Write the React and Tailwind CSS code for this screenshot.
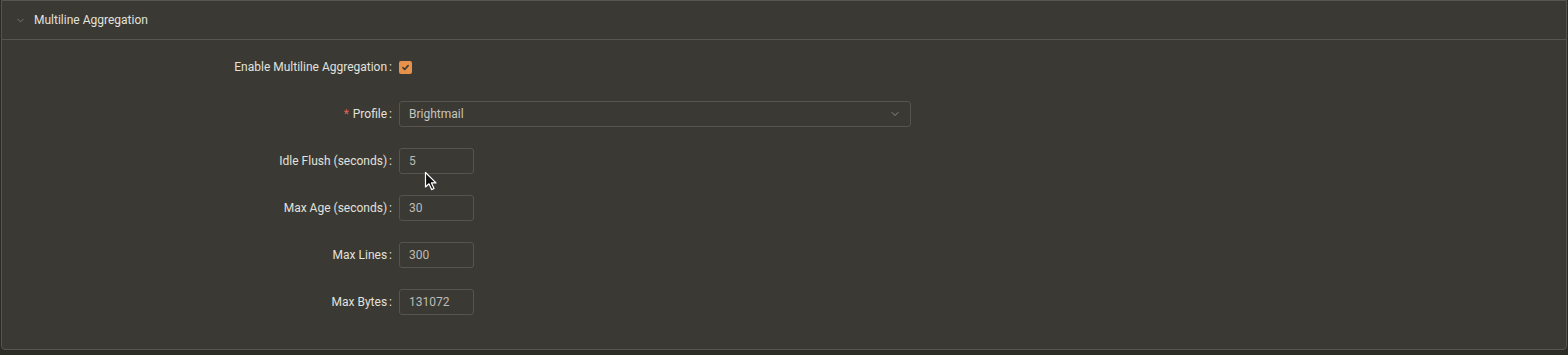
import { ChevronDown } from 'lucide-react';

const font = { fontFamily: 'Roboto, "Liberation Sans", sans-serif' };

function Row({ label, required, children }) {
  return (
    <div className="flex h-[32px] items-center mb-[15px]">
      <div className="w-[390px] shrink-0 flex justify-end items-center text-[12px] text-[#e2e1dc]">
        {required && <span className="text-[#e0645a] mr-[4px]">*</span>}
        <span>{label}</span>
        <span className="ml-[2px]">:</span>
      </div>
      <div className="pl-[7px] flex items-center">{children}</div>
    </div>
  );
}

function NumInput({ value }) {
  return (
    <div className="relative w-[75px] h-[26px] rounded-[3px] border border-[#55544e] bg-[#3a3934] flex items-center px-[9px] text-[12px] text-[#bdbcb6]">
      {value}
    </div>
  );
}

export default function App() {
  return (
    <div className="w-[1568px] h-[355px] bg-[#2c2c27] pr-[1px] pl-[1px]" style={font}>
      <div className="h-[350px] rounded-b-[4px] border border-[#56554f] bg-[#3a3934]">
        <div className="h-[39px] flex items-center border-b border-[#56554f] pl-[13px]">
          <ChevronDown className="w-[11px] h-[11px] text-[#8e8d87]" strokeWidth={1.5} />
          <span className="ml-[8px] text-[12px] text-[#e2e1dc]">Multiline Aggregation</span>
        </div>
        <div className="pt-[11px]">
          <Row label="Enable Multiline Aggregation">
            <div className="w-[13px] h-[13px] rounded-[2px] bg-[#e8914a] flex items-center justify-center">
              <svg viewBox="0 0 12 12" className="w-[9px] h-[9px]" fill="none" stroke="#3a3934" strokeWidth="2" strokeLinecap="round" strokeLinejoin="round">
                <path d="M2.5 6.2 L5 8.5 L9.5 3.5" />
              </svg>
            </div>
          </Row>
          <Row label="Profile" required>
            <div className="w-[512px] h-[26px] rounded-[3px] border border-[#55544e] bg-[#3a3934] flex items-center justify-between pl-[9px] pr-[9px] text-[12px] text-[#c6c5bf]">
              <span>Brightmail</span>
              <ChevronDown className="w-[12px] h-[12px] text-[#a3a29c]" strokeWidth={1.5} />
            </div>
          </Row>
          <Row label="Idle Flush (seconds)">
            <div className="relative">
              <NumInput value="5" />
              <svg className="absolute left-[25px] top-[23px] w-[16px] h-[22px]" viewBox="0 0 16 22">
                <path d="M1.5 1.5 L1.5 16 L5 12.8 L7.6 18.6 L10 17.5 L7.5 11.9 L12 11.9 Z" fill="#111" stroke="#fff" strokeWidth="1.2" strokeLinejoin="round" />
              </svg>
            </div>
          </Row>
          <Row label="Max Age (seconds)">
            <NumInput value="30" />
          </Row>
          <Row label="Max Lines">
            <NumInput value="300" />
          </Row>
          <Row label="Max Bytes">
            <NumInput value="131072" />
          </Row>
        </div>
      </div>
    </div>
  );
}
